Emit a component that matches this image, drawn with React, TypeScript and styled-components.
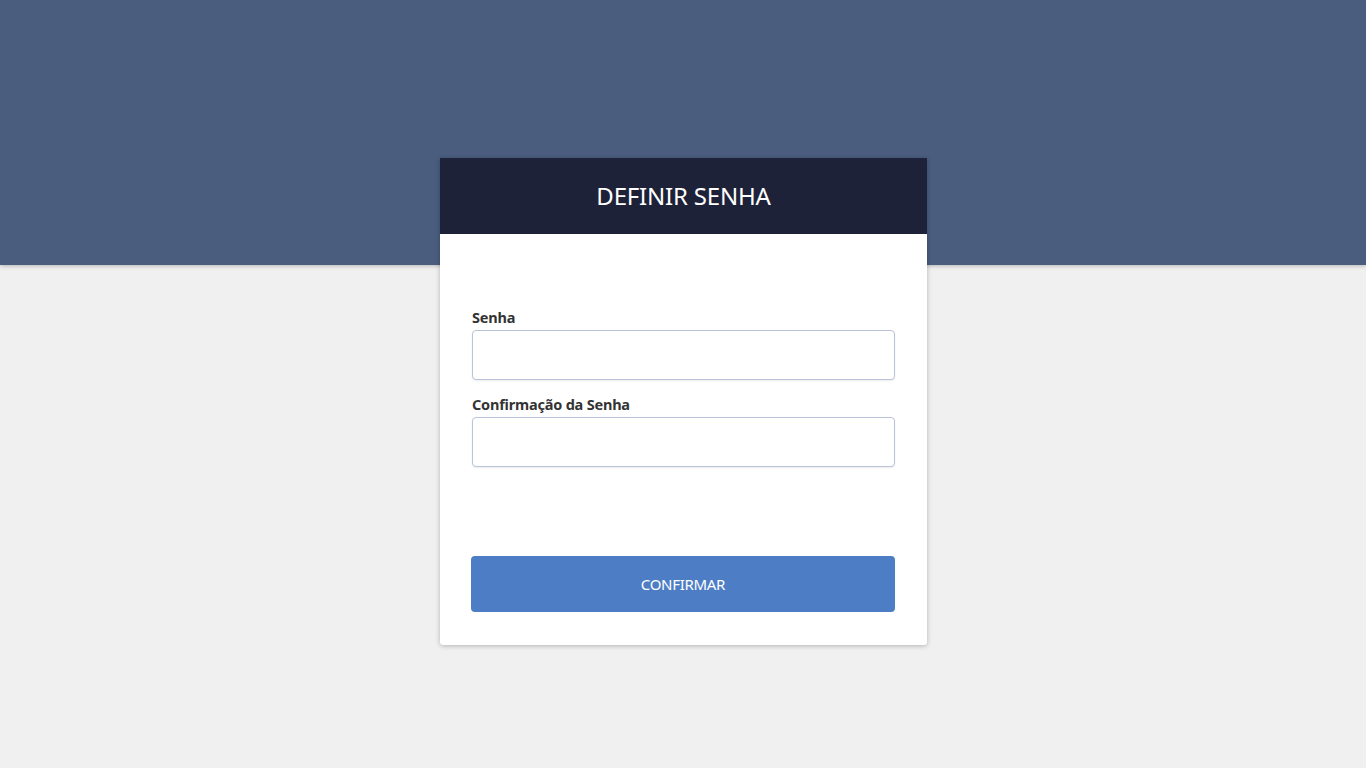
import React from "react";
import styled, { createGlobalStyle } from "styled-components";

const Global = createGlobalStyle`
  html, body { margin: 0; padding: 0; }
  body {
    background: #f0f0f0;
    font-family: "Noto Sans", "Open Sans", "DejaVu Sans", sans-serif;
    color: #333;
  }
  * { box-sizing: border-box; }
`;

const Page = styled.div`
  min-height: 768px;
  display: flex;
  flex-direction: column;
`;

const Band = styled.div`
  height: 265px;
  background: #4a5d7e;
  box-shadow: 0 1px 4px rgba(0, 0, 0, 0.25);
`;

const Center = styled.div`
  display: flex;
  justify-content: center;
  margin-top: -107px;
  position: relative;
`;

const Card = styled.div`
  width: 487px;
  margin-left: 1px;
  background: #fff;
  border-radius: 0 0 3px 3px;
  box-shadow: 0 1px 5px rgba(0, 0, 0, 0.25);
`;

const Header = styled.div`
  height: 76px;
  background: #1e2239;
  display: flex;
  align-items: center;
  justify-content: center;
`;

const Title = styled.h1`
  margin: 0;
  font-size: 24px;
  font-weight: 400;
  color: #fff;
  letter-spacing: -0.2px;
  padding-bottom: 2px;
`;

const Body = styled.form`
  padding: 74px 32px 33px 32px;
  display: flex;
  flex-direction: column;
`;

const Field = styled.div<{ $gap?: number }>`
  display: flex;
  flex-direction: column;
  margin-bottom: ${(p) => p.$gap ?? 0}px;
`;

const Label = styled.label`
  font-size: 14.5px;
  font-weight: 700;
  line-height: 18px;
  color: #333;
  margin-bottom: 4px;
  letter-spacing: -0.2px;
`;

const Input = styled.input`
  height: 50px;
  width: 100%;
  border: 1px solid #b9c3d9;
  border-radius: 4px;
  background: #fff;
  box-shadow: 0 1px 2px rgba(0, 0, 0, 0.08);
  outline: none;
  font-family: inherit;
  font-size: 14px;
  padding: 0 12px;
`;

const Button = styled.button`
  height: 56px;
  width: 424px;
  margin-left: -1px;
  border: none;
  border-radius: 4px;
  background: #4d7ec5;
  color: #fff;
  font-family: inherit;
  font-size: 15px;
  letter-spacing: -0.3px;
  cursor: pointer;
`;

export default function App() {
  return (
    <Page>
      <Global />
      <Band />
      <Center>
        <Card>
          <Header>
            <Title>DEFINIR SENHA</Title>
          </Header>
          <Body onSubmit={(e) => e.preventDefault()}>
            <Field $gap={15}>
              <Label>Senha</Label>
              <Input type="password" />
            </Field>
            <Field $gap={89}>
              <Label>Confirmação da Senha</Label>
              <Input type="password" />
            </Field>
            <Button type="submit">CONFIRMAR</Button>
          </Body>
        </Card>
      </Center>
    </Page>
  );
}
